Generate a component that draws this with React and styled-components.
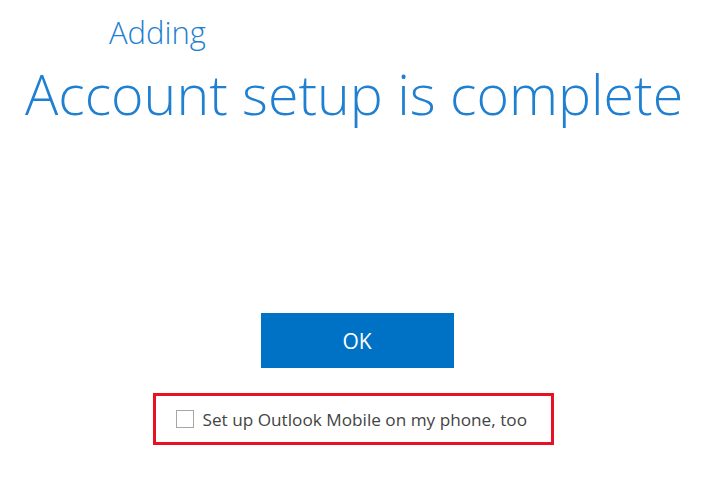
import React from "react";
import styled, { createGlobalStyle } from "styled-components";

const GlobalStyle = createGlobalStyle`
  body {
    margin: 0;
    background: #ffffff;
    font-family: "Open Sans", "Noto Sans", sans-serif;
  }
`;

const Page = styled.div`
  width: 702px;
  height: 484px;
  display: flex;
  flex-direction: column;
  overflow: hidden;
`;

const Header = styled.div`
  padding: 10px 0 0 25px;
  color: #1f7fd1;
  font-weight: 300;
`;

const SubTitle = styled.div`
  margin-left: 84px;
  font-size: 31px;
  line-height: 44px;
`;

const Title = styled.h1`
  margin: 0;
  margin-top: 5px;
  font-size: 55.5px;
  font-weight: 300;
  line-height: 70px;
  white-space: nowrap;
`;

const Footer = styled.div`
  margin-top: auto;
  margin-bottom: 39px;
  display: flex;
  flex-direction: column;
  align-items: center;
  padding-left: 4px;
`;

const OkButton = styled.button`
  width: 193px;
  height: 55px;
  margin-left: 8px;
  border: none;
  background: #0072c6;
  color: #ffffff;
  font-family: "Open Sans", sans-serif;
  font-size: 21px;
  cursor: pointer;
`;

const Highlight = styled.label`
  margin-top: 25px;
  width: 375px;
  height: 46px;
  border: 3px solid #e81123;
  display: flex;
  align-items: center;
  gap: 9px;
  padding-left: 20px;
  box-sizing: content-box;
  color: #444444;
  font-size: 17.2px;
  white-space: nowrap;
`;

const Box = styled.span`
  width: 18px;
  height: 18px;
  flex-shrink: 0;
  border: 1px solid #a6a6a6;
  box-sizing: border-box;
  background: #fff;
`;

export default function App() {
  return (
    <Page>
      <GlobalStyle />
      <Header>
        <SubTitle>Adding</SubTitle>
        <Title>Account setup is complete</Title>
      </Header>
      <Footer>
        <OkButton>OK</OkButton>
        <Highlight>
          <Box />
          Set up Outlook Mobile on my phone, too
        </Highlight>
      </Footer>
    </Page>
  );
}
